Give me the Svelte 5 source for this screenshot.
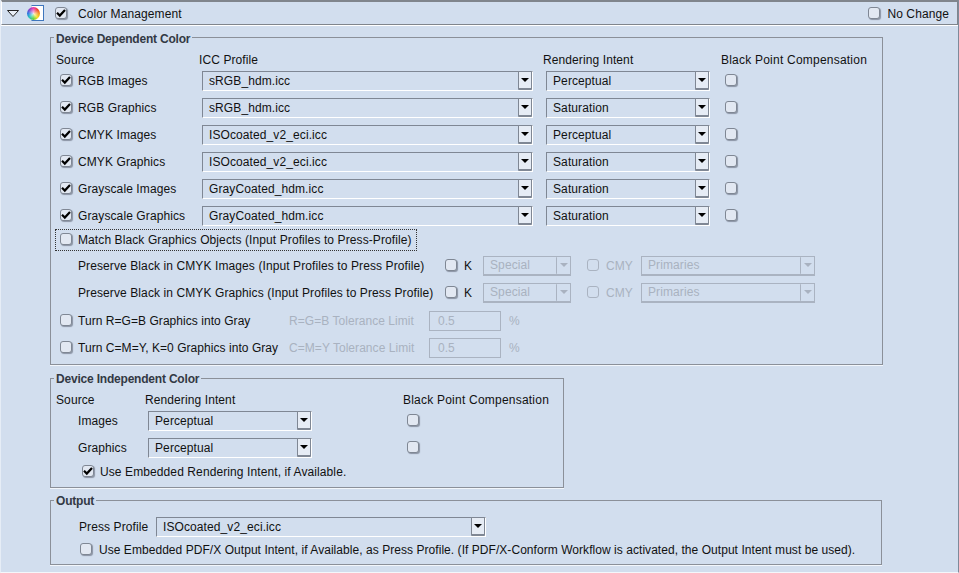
<script>
  const profiles = [
    { label: "RGB Images", icc: "sRGB_hdm.icc", intent: "Perceptual" },
    { label: "RGB Graphics", icc: "sRGB_hdm.icc", intent: "Saturation" },
    { label: "CMYK Images", icc: "ISOcoated_v2_eci.icc", intent: "Perceptual" },
    { label: "CMYK Graphics", icc: "ISOcoated_v2_eci.icc", intent: "Saturation" },
    { label: "Grayscale Images", icc: "GrayCoated_hdm.icc", intent: "Saturation" },
    { label: "Grayscale Graphics", icc: "GrayCoated_hdm.icc", intent: "Saturation" },
  ];
  const preserve = [
    "Preserve Black in CMYK Images (Input Profiles to Press Profile)",
    "Preserve Black in CMYK Graphics (Input Profiles to Press Profile)",
  ];
  const turns = [
    { label: "Turn R=G=B Graphics into Gray", limit: "R=G=B Tolerance Limit" },
    { label: "Turn C=M=Y, K=0 Graphics into Gray", limit: "C=M=Y Tolerance Limit" },
  ];
</script>

{#snippet check(checked = false, disabled = false)}
  <span class="check" class:disabled>
    {#if checked}
      <svg width="10" height="10" viewBox="0 0 10 10">
        <path d="M1 4.8 L3.8 7.6 L9 2" fill="none" stroke="#000" stroke-width="2.2" />
      </svg>
    {/if}
  </span>
{/snippet}

{#snippet select(value, width, disabled = false)}
  <span class="select" class:disabled style="width: {width}px">
    <span class="select-value">{value}</span>
    <span class="select-arrow"><i></i></span>
  </span>
{/snippet}

<div class="page">
  <header class="bar">
    <svg class="twisty" width="12" height="7" viewBox="0 0 12 7">
      <path d="M0.5 0.5 H11.5 L6 6.5 Z" fill="#e8eef6" stroke="#222" />
    </svg>
    <span class="wheel-box"><span class="wheel"></span></span>
    {@render check(true)}
    <span class="bar-title">Color Management</span>
    <span class="no-change">
      {@render check()}
      <span>No Change</span>
    </span>
  </header>

  <fieldset class="group dependent">
    <legend>Device Dependent Color</legend>
    <div class="table">
      <span>Source</span>
      <span>ICC Profile</span>
      <span>Rendering Intent</span>
      <span class="wide">Black Point Compensation</span>
      {#each profiles as p}
        <span class="source">{@render check(true)}<span>{p.label}</span></span>
        <span class="cell">{@render select(p.icc, 331)}</span>
        <span class="cell">{@render select(p.intent, 164)}</span>
        <span class="cell bpc">{@render check()}</span>
      {/each}
    </div>

    <div class="match">
      {@render check()}
      <span>Match Black Graphics Objects (Input Profiles to Press-Profile)</span>
    </div>

    {#each preserve as label}
      <div class="preserve">
        <span class="preserve-label">{label}</span>
        {@render check()}
        <span class="k">K</span>
        {@render select("Special", 88, true)}
        <span class="cmy-check">{@render check(false, true)}</span>
        <span class="cmy muted">CMY</span>
        {@render select("Primaries", 174, true)}
      </div>
    {/each}

    {#each turns as t}
      <div class="turn">
        {@render check()}
        <span class="turn-label">{t.label}</span>
        <span class="limit muted">{t.limit}</span>
        <span class="field muted">0.5</span>
        <span class="percent muted">%</span>
      </div>
    {/each}
  </fieldset>

  <fieldset class="group independent">
    <legend>Device Independent Color</legend>
    <div class="table small">
      <span>Source</span>
      <span>Rendering Intent</span>
      <span class="wide">Black Point Compensation</span>
      {#each ["Images", "Graphics"] as label}
        <span class="plain">{label}</span>
        <span class="cell">{@render select("Perceptual", 164)}</span>
        <span class="cell bpc">{@render check()}</span>
      {/each}
    </div>
    <div class="embedded">
      {@render check(true)}
      <span>Use Embedded Rendering Intent, if Available.</span>
    </div>
  </fieldset>

  <fieldset class="group output">
    <legend>Output</legend>
    <div class="press">
      <span class="press-label">Press Profile</span>
      {@render select("ISOcoated_v2_eci.icc", 330)}
    </div>
    <div class="intent">
      {@render check()}
      <span>Use Embedded PDF/X Output Intent, if Available, as Press Profile. (If PDF/X-Conform Workflow is activated, the Output Intent must be used).</span>
    </div>
  </fieldset>
</div>

<style>
  :global(body) {
    margin: 0;
    background: #d2deee;
  }
  .page {
    width: 959px;
    height: 573px;
    box-sizing: border-box;
    overflow: hidden;
    border-left: 1px solid #e6edf6;
    border-right: 1px solid #7f8a9a;
    border-bottom: 1px solid #f4f7fb;
    font: 12px "Liberation Sans", Arial, sans-serif;
    color: #111;
    letter-spacing: 0.1px;
  }
  .bar {
    height: 25px;
    box-sizing: border-box;
    display: flex;
    align-items: center;
    border-top: 2px solid #80858c;
    border-bottom: 1px solid #80858c;
    border-left: 1px solid #fff;
    border-right: 1px solid #80858c;
    box-shadow: 0 1px 0 #fff;
    padding: 2px 0 0 5px;
  }
  .twisty {
    margin: 0 12px 2px 0;
  }
  .wheel-box {
    width: 13px;
    height: 16px;
    box-sizing: border-box;
    border: 1px solid #3f76bd;
    border-left-color: #cfd9ea;
    background: #fff;
    margin: 0 11px 2px 0;
    display: flex;
    align-items: center;
  }
  .wheel {
    width: 13px;
    height: 13px;
    margin-left: -5px;
    flex: none;
    border-radius: 50%;
    background:
      radial-gradient(circle, #fffc 0, #fff0 60%),
      conic-gradient(#e83ab0, #f0402c, #f59a1c, #f6e020, #5fd03c, #26c8b8, #2a78e0, #8a3cc8, #e83ab0);
  }
  .bar-title {
    margin-left: 11px;
  }
  .no-change {
    margin-left: auto;
    margin-right: 8px;
    display: flex;
    align-items: center;
    gap: 7px;
  }
  .check {
    width: 10px;
    height: 10px;
    flex: none;
    display: inline-block;
    margin-bottom: 2px;
    background: #e2e8f2;
    border: 1px solid #7f8794;
    border-radius: 3px;
    box-shadow: 1px 1px 1px #8a93a3;
  }
  .check svg {
    display: block;
  }
  .check.disabled {
    border-color: #aab3c1;
    background: #d2deee;
    box-shadow: none;
  }
  .group {
    margin: 0 0 0 49px;
    padding: 0;
    min-width: 0;
    box-sizing: border-box;
    border: 1px solid #8b9099;
    box-shadow: 0 1px 0 #f2f6fb;
  }
  legend {
    margin-left: 3px;
    padding: 4px 2px 0;
    font-weight: bold;
    line-height: 14px;
    color: #333944;
    letter-spacing: -0.2px;
  }
  .independent legend,
  .output legend {
    padding: 3px 2px 1px;
  }
  .dependent {
    width: 833px;
    height: 337px;
    margin-top: 3px;
  }
  .independent {
    width: 514px;
    height: 119px;
    margin-top: 4px;
  }
  .output {
    width: 832px;
    height: 74px;
    margin-top: 3px;
  }
  .table {
    display: grid;
    grid-template-columns: 143px 344px 178px 1fr;
    grid-template-rows: 21px;
    grid-auto-rows: 27px;
    padding-left: 5px;
    height: 183px;
  }
  .table > span {
    display: flex;
    align-items: center;
  }
  .table:not(.small) > span:nth-child(-n+4),
  .table.small > span:nth-child(-n+3) {
    align-items: flex-end;
  }
  .wide {
    letter-spacing: 0.22px;
  }
  .table.small {
    grid-template-columns: 89px 258px 1fr;
    grid-template-rows: 20px;
    height: 74px;
  }
  .source {
    padding-left: 4px;
    gap: 6px;
  }
  .cell {
    padding-left: 3px;
  }
  .bpc {
    padding-left: 4px;
  }
  .plain {
    padding-left: 22px;
  }
  .select {
    height: 20px;
    box-sizing: border-box;
    display: inline-flex;
    flex: none;
    border-top: 1px solid #7f8794;
    border-left: 1px solid #7f8794;
    border-bottom: 1px solid #fff;
    border-right: 1px solid #fff;
  }
  .select-value {
    flex: 1;
    padding-left: 6px;
    line-height: 18px;
    white-space: nowrap;
  }
  .select-arrow {
    width: 14px;
    height: 19px;
    margin-top: -1px;
    box-sizing: border-box;
    border: 1px solid #7f8794;
    border-bottom-width: 2px;
    border-radius: 1px;
    background: #e6ecf5;
    display: flex;
    align-items: center;
    justify-content: center;
  }
  .select-arrow i {
    width: 0;
    height: 0;
    border-left: 4px solid transparent;
    border-right: 4px solid transparent;
    border-top: 4px solid #000;
  }
  .select.disabled {
    border: 1px solid #aab3c1;
    border-bottom-width: 2px;
    color: #a9b2c0;
  }
  .select.disabled .select-value {
    line-height: 17px;
  }
  .select.disabled .select-arrow {
    border: none;
    border-left: 1px solid #aab3c1;
    background: #d2deee;
    height: 17px;
    margin-top: 0;
  }
  .select.disabled .select-arrow i {
    border-top-color: #a9b2c0;
  }
  .match {
    width: 362px;
    height: 22px;
    box-sizing: border-box;
    margin-left: 4px;
    border: 1px dotted #333;
    display: flex;
    align-items: center;
    gap: 6px;
    padding-left: 4px;
  }
  .preserve {
    height: 27px;
    display: flex;
    align-items: center;
    padding-left: 27px;
  }
  .match + .preserve {
    margin-top: 1px;
  }
  .preserve-label {
    width: 367px;
    white-space: nowrap;
  }
  .k {
    margin-left: 7px;
    width: 19px;
  }
  .cmy-check {
    margin-left: 16px;
    display: flex;
  }
  .cmy {
    margin-left: 7px;
    width: 35px;
  }
  .muted {
    color: #a9b2c0;
  }
  .turn {
    height: 27px;
    display: flex;
    align-items: center;
    padding-left: 9px;
    gap: 6px;
    letter-spacing: 0.05px;
  }
  .preserve + .turn {
    margin-top: 1px;
  }
  .turn-label {
    width: 205px;
    white-space: nowrap;
  }
  .limit {
    width: 134px;
    white-space: nowrap;
  }
  .field {
    width: 72px;
    height: 20px;
    box-sizing: border-box;
    border: 1px solid #aab3c1;
    padding-left: 8px;
    line-height: 18px;
  }
  .percent {
    margin-left: 2px;
  }
  .embedded {
    display: flex;
    align-items: center;
    gap: 6px;
    padding-left: 31px;
    margin-top: 2px;
    height: 18px;
  }
  .press {
    display: flex;
    align-items: center;
    padding-left: 28px;
    margin-top: 8px;
    height: 20px;
  }
  .press-label {
    width: 77px;
  }
  .intent {
    display: flex;
    align-items: center;
    gap: 7px;
    padding-left: 29px;
    margin-top: 4px;
    height: 18px;
    white-space: nowrap;
    letter-spacing: 0.05px;
  }
</style>
